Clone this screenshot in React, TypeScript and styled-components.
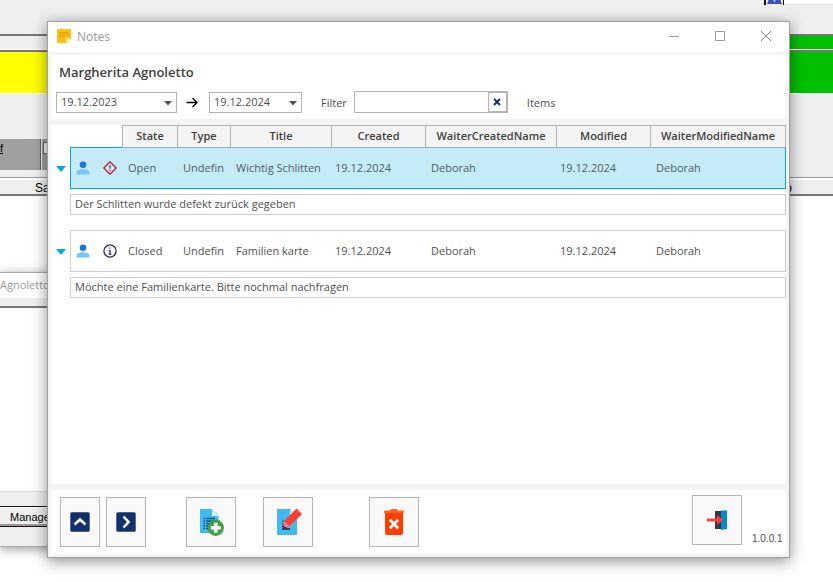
import React from "react";
import styled, { createGlobalStyle } from "styled-components";

const GlobalStyle = createGlobalStyle`
  *, *::before, *::after { box-sizing: border-box; }
  html, body, #root { height: 100%; margin: 0; }
  body { overflow: hidden; background: #fff; font: 11px/16px "Open Sans", "Noto Sans", sans-serif; color: #505050; }
  button, input, select { font: inherit; color: inherit; border-radius: 0; margin: 0; }
`;

const Desktop = styled.div`
  position: relative;
  min-height: 100vh;
  display: flex;
  flex-direction: column;
  font: 11px/12px "Liberation Sans", sans-serif;
  color: #000;
`;

const TopStrip = styled.div`
  height: 34px;
  flex: none;
  background: #efefef;
  display: flex;
  justify-content: flex-end;
  align-items: flex-start;
`;

const UserBadge = styled.div`
  width: 20px;
  height: 5px;
  border: solid #111;
  border-width: 0 1px 0 2px;
  background: #efefef;
  svg { display: block; }
`;

const TopField = styled.div`
  width: 49px;
  height: 5px;
  background: #fff;
  border-bottom: 1px solid #e0e0e0;
`;

const Band = styled.div<{ $height: number; $left: string }>`
  height: ${(p) => p.$height}px;
  flex: none;
  border-top: 2px solid #777;
  border-bottom: 1px solid #fff;
  background: linear-gradient(90deg, ${(p) => p.$left} 50%, #00c000 50%);
`;

const Gap = styled.div<{ $height: number }>`
  height: ${(p) => p.$height}px;
  flex: none;
  background: #efefef;
`;

const GreyRow = styled.div`
  height: 31px;
  flex: none;
  display: flex;
  background: #efefef;
`;

const GreyCell = styled.div<{ $width: number }>`
  width: ${(p) => p.$width}px;
  padding: 3px 0 0;
  background: #a0a0a0;
  border-right: 1px solid #606060;
  margin-right: 1px;
  text-decoration: underline;
`;

const GreyBox = styled.div`
  width: 12px;
  height: 12px;
  margin: 0 1px;
  background: #efefef;
  border: 1px solid #666;
`;

const ColumnHeads = styled.div`
  height: 19px;
  flex: none;
  display: flex;
  justify-content: space-between;
  align-items: center;
  padding: 4px 41px 0 35px;
  font-size: 12px;
  background: linear-gradient(#999 1px, #fff 1px, #fff 3px, #efefef 3px);
  border-bottom: 2px solid #777;
`;

const Paper = styled.div`
  flex: 1;
  background: #fff;
`;

const ListWindow = styled.section`
  position: absolute;
  top: 272px;
  bottom: 35px;
  left: 0;
  width: 400px;
  display: flex;
  flex-direction: column;
  background: #efefef;
  border: solid #aaa;
  border-width: 1px 0;
  box-shadow: 0 2px 10px rgba(0, 0, 0, 0.4);
`;

const ListTitle = styled.div`
  height: 25px;
  flex: none;
  background: #fff;
  color: #999;
  font: 11px/24px "Open Sans", "Noto Sans", sans-serif;
`;

const ListBody = styled.div`
  flex: 1;
  margin-top: 8px;
  background: #fff;
  border-top: 2px solid #777;
  border-bottom: 1px solid #ddd;
`;

const ListFooter = styled.div`
  height: 54px;
  flex: none;
  padding: 14px 0 0;
`;

const ListButton = styled.button`
  display: block;
  width: 120px;
  height: 21px;
  padding: 0 0 0 10px;
  text-align: left;
  font: 11px/14px "Liberation Sans", sans-serif;
  color: #000;
  background: #efefef;
  border: solid #201015;
  border-width: 1px 0;
  box-shadow: inset 0 1px #fff, inset 0 -2px #999;
`;

const Dialog = styled.main`
  position: absolute;
  inset: 21px 43px 24px 47px;
  display: flex;
  flex-direction: column;
  background: #f4f4f4;
  border: 1px solid #a0a0a0;
  box-shadow: 0 3px 14px rgba(0, 0, 0, 0.45);
  font: 11px/16px "Open Sans", "Noto Sans", sans-serif;
  color: #505050;
`;

const TitleBar = styled.header`
  height: 30px;
  flex: none;
  display: flex;
  align-items: flex-start;
  padding-left: 9px;
  background: #fff;
  color: #999;
  font-size: 12px;
`;

const TitleIcon = styled.span`
  height: 28px;
  display: grid;
  place-items: center;
`;

const TitleText = styled.span`
  flex: 1;
  margin-left: 6px;
  line-height: 30px;
`;

const CaptionButton = styled.button`
  width: 46px;
  height: 28px;
  padding: 0;
  display: grid;
  place-items: center;
  border: 0;
  background: none;
`;

const Panel = styled.section`
  margin: 3px 3px 0;
  flex: none;
  background: #fff;
`;

const FilterPanel = styled(Panel)`
  height: 64px;
  padding: 8px 5px 0;
`;

const Heading = styled.h1`
  margin: 0 0 10px 3px;
  font-size: 13px;
  line-height: 18px;
  font-weight: 600;
  color: #404040;
`;

const FilterRow = styled.div`
  display: flex;
  align-items: flex-end;
  height: 22px;
`;

const DateBox = styled.span<{ $width: number }>`
  position: relative;
  width: ${(p) => p.$width}px;
  height: 21px;
  svg { position: absolute; right: 5px; top: 9px; pointer-events: none; }
`;

const DateSelect = styled.select`
  appearance: none;
  width: 100%;
  height: 21px;
  padding: 0 0 1px 4px;
  border: 1px solid #b4b4b4;
  background: #fff;
  line-height: 16px;
`;

const RangeArrow = styled.span`
  width: 32px;
  height: 22px;
  padding-right: 2px;
  display: grid;
  place-items: center;
`;

const FilterLabel = styled.label`
  margin: 0 7px 0 19px;
  line-height: 20px;
`;

const SearchBox = styled.div`
  display: flex;
  width: 154px;
  height: 22px;
  border: 1px solid #b4b4b4;
`;

const SearchInput = styled.input`
  flex: 1;
  min-width: 0;
  padding: 0 4px;
  border: 0;
  outline: 0;
  background: #fff;
`;

const ClearButton = styled.button`
  width: 19px;
  height: 20px;
  padding: 0;
  display: grid;
  place-items: center;
  border: 1px solid #b4b4b4;
  background: #fff;
`;

const ItemsText = styled.span`
  margin-left: 19px;
  line-height: 20px;
`;

const ListPanel = styled(Panel)`
  margin-top: 6px;
  flex: 1;
  min-height: 0;
`;

const Table = styled.table`
  width: 100%;
  table-layout: fixed;
  border-collapse: separate;
  border-spacing: 0;
`;

const Col = styled.col<{ $width?: number }>`
  width: ${(p) => (p.$width ? `${p.$width}px` : "auto")};
`;

const HeadCell = styled.th`
  height: 22px;
  padding: 0 0 1px;
  font-weight: 600;
  color: #404040;
  background: #f4f4f4;
  border: solid #b4b4b4;
  border-width: 1px 0 0 1px;
  &:last-child { border-right-width: 1px; }
`;

const BlankHead = styled.td`
  padding: 0;
`;

const NoteRow = styled.tr<{ $selected: boolean }>`
  height: 42px;
  color: ${(p) => (p.$selected ? "#46626c" : "#505050")};
  --fill: ${(p) => (p.$selected ? "#c5ebf6" : "#fff")};
  --edge: ${(p) => (p.$selected ? "#00a8dc" : "#ccc")};
  --top: ${(p) => (p.$selected ? "#9db2b8" : "#ccc")};
`;

const ExpandCell = styled.td`
  padding: 1px 0 0 5px;
`;

const ExpandButton = styled.button`
  display: block;
  padding: 0;
  border: 0;
  background: none;
  svg { display: block; }
`;

const Cell = styled.td`
  padding: 0 0 0 6px;
  white-space: nowrap;
  overflow: hidden;
  background: var(--fill);
  border: solid var(--edge);
  border-width: 1px 0;
  border-top-color: var(--top);
  &:last-child { border-right-width: 1px; }
`;

const DateCell = styled(Cell)`
  padding-left: 4px;
`;

const IconCell = styled(Cell)<{ $first?: boolean }>`
  padding-left: ${(p) => (p.$first ? 5 : 7)}px;
  border-top-color: var(--edge);
  border-left-width: ${(p) => (p.$first ? 1 : 0)}px;
  svg { display: block; }
`;

const DetailCell = styled.td`
  padding: 5px 0 15px;
`;

const DetailBox = styled.div`
  height: 21px;
  padding: 1px 4px;
  border: 1px solid #ccc;
  background: #fff;
`;

const ActionBar = styled.footer`
  display: flex;
  align-items: flex-start;
  flex: none;
  height: 64px;
  margin: 6px 3px 3px;
  padding: 7px 4px 0 9px;
  background: #fff;
`;

const ActionButton = styled.button<{ $width: number; $gap: number }>`
  width: ${(p) => p.$width}px;
  height: 50px;
  margin-right: ${(p) => p.$gap}px;
  padding: 0;
  display: grid;
  place-items: center;
  border: 1px solid #b4b4b4;
  background: #f9f9f9;
`;

const ExitGroup = styled.div`
  display: flex;
  align-items: flex-end;
  height: 48px;
  margin-left: auto;
`;

const Version = styled.span`
  width: 30px;
  font: 10px/12px "Liberation Sans", sans-serif;
  white-space: nowrap;
`;

const NoteIcon = () => (
  <svg width="14" height="14" viewBox="0 0 14 14">
    <path d="M0 0h14v10l-4 4H0z" fill="#ffc107" />
    <path d="M9 14v-4.500h5z" fill="#fff3c4" />
    <path d="M2 3.500h10M2 5.500h10M2 7.500h6" stroke="#e8a000" />
  </svg>
);

const Caret = () => (
  <svg width="8" height="5" viewBox="0 0 8 5">
    <path d="M0 0h8L4 4.500z" fill="#505050" />
  </svg>
);

const ArrowIcon = () => (
  <svg width="12" height="11" viewBox="0 0 12 11">
    <path d="M.5 5.500H11M6.500 1L11 5.500 6.500 10" fill="none" stroke="#000" strokeWidth="1.300" />
  </svg>
);

const ClearIcon = () => (
  <svg width="8" height="8" viewBox="0 0 8 8">
    <path d="M1 1l6 6M7 1L1 7" stroke="#14336b" strokeWidth="2" />
  </svg>
);

const Triangle = () => (
  <svg width="10" height="6" viewBox="0 0 10 6">
    <path d="M0 0h10L5 6z" fill="#00a8dc" />
  </svg>
);

const PersonIcon = () => (
  <svg width="14" height="14" viewBox="0 0 14 14">
    <circle cx="7" cy="3.700" r="3.300" fill="#1976d2" />
    <path d="M.6 13.500v-1.700C.6 9.300 3 8.200 7 8.200s6.400 1.100 6.400 3.600v1.700z" fill="#7cc3f7" />
  </svg>
);

const WarningIcon = () => (
  <svg width="14" height="14" viewBox="0 0 14 14">
    <path d="M7 .8L13.200 7 7 13.200.8 7z" fill="none" stroke="#b3263c" strokeWidth="1.300" strokeLinejoin="round" />
    <path d="M7 4v3.700M7 8.800v1.300" stroke="#b3263c" strokeWidth="1.300" />
  </svg>
);

const InfoIcon = () => (
  <svg width="14" height="14" viewBox="0 0 14 14">
    <circle cx="7" cy="7" r="6.100" fill="none" stroke="#2e2673" strokeWidth="1.300" />
    <path d="M7 3.400v1.400M5.600 6.500H7v3.500M5.500 10.100h3" fill="none" stroke="#2e2673" strokeWidth="1.200" />
  </svg>
);

const SquareArrow = ({ d }: { d: string }) => (
  <svg width="20" height="20" viewBox="0 0 20 20">
    <rect x=".3" y=".3" width="19.400" height="19.400" rx="1.500" fill="#14306a" />
    <path d={d} fill="none" stroke="#fff" strokeWidth="2.600" />
  </svg>
);

const AddIcon = () => (
  <svg width="28" height="30" viewBox="0 0 28 30">
    <path d="M3 2h12l6.500 6.500V26H3z" fill="#40baf1" />
    <path d="M15 2.500L21.500 9H15z" fill="#e1f5fe" />
    <path d="M6.500 11.500H8m1 0h9M6.500 14h1.500m1 0h9M6.500 16.500H8m1 0h9M6.500 19H8m1 0h9M6.500 21.500H8m1 0h4" stroke="#14508a" strokeWidth="1.500" />
    <circle cx="18.700" cy="20.700" r="8.200" fill="#43a047" />
    <path d="M18.700 15.700v10M13.700 20.700h10" stroke="#fff" strokeWidth="3.600" />
  </svg>
);

const EditIcon = () => (
  <svg width="28" height="30" viewBox="0 0 28 30">
    <path d="M3 2h13l7 7v19H3z" fill="#40baf1" />
    <path d="M16 2.500L21.500 8H16z" fill="#e1f5fe" />
    <path d="M8 14.500h6M8 17h5M8 19.500h7M8 22h8" stroke="#14407a" strokeWidth="1.600" />
    <path d="M9 17l5 4.500 2-.5v1.500H9z" fill="#2c3c50" />
    <path d="M22.500 1.500L28 7 15.500 19.500 10 14z" fill="#f44336" />
    <path d="M10 14l5.500 5.500-1.500 1.300-4-1.200-1.200-3.600z" fill="#f7807a" />
  </svg>
);

const DeleteIcon = () => (
  <svg width="20" height="26" viewBox="0 0 20 26">
    <path d="M1 4h18v19.500a2.500 2.500 0 0 1-2.500 2.500h-13A2.500 2.500 0 0 1 1 23.500z" fill="#ff3d00" />
    <path d="M6 1.500Q6 0 7.500 0h5Q14 0 14 1.500h5a1 1 0 0 1 1 1V4H0V2.500a1 1 0 0 1 1-1z" fill="#ff6333" />
    <path d="M5.800 10.800l8.400 8.400M14.200 10.800l-8.400 8.400" stroke="#fff" strokeWidth="2.800" />
  </svg>
);

const ExitIcon = () => (
  <svg width="20" height="20" viewBox="0 0 20 20">
    <path d="M8 1h7v18H8z" fill="#37353f" />
    <path d="M14 .5h6v18.500l-6 1z" fill="#0288d1" />
    <path d="M0 8.500h10V5l6 5-6 5v-3.500H0z" fill="#f44336" />
  </svg>
);

type Note = {
  selected: boolean;
  urgent: boolean;
  state: string;
  title: string;
  text: string;
};

const notes: Note[] = [
  { selected: true, urgent: true, state: "Open", title: "Wichtig Schlitten", text: "Der Schlitten wurde defekt zurück gegeben" },
  { selected: false, urgent: false, state: "Closed", title: "Familien karte", text: "Möchte eine Familienkarte. Bitte nochmal nachfragen" },
];

const heads = ["State", "Type", "Title", "Created", "WaiterCreatedName", "Modified", "WaiterModifiedName"];
const widths = [19, 26, 26, 55, 53, 101, 94, 131, 94];

export default function App() {
  return (
    <>
      <GlobalStyle />
      <Desktop>
        <TopStrip>
          <UserBadge>
            <svg width="17" height="4" viewBox="0 0 17 4">
              <path d="M1 4l1.500-4h12L16 4z" fill="#3c50b4" />
              <path d="M7 0h3L8.500 3z" fill="#9fa8da" />
            </svg>
          </UserBadge>
          <TopField />
        </TopStrip>
        <Band $height={16} $left="#efefef" />
        <Band $height={44} $left="#ffff00" />
        <Gap $height={45} />
        <GreyRow>
          <GreyCell $width={41}>f</GreyCell>
          <GreyCell $width={60}>
            <GreyBox />
          </GreyCell>
        </GreyRow>
        <Gap $height={7} />
        <ColumnHeads>
          <span>Sa</span>
          <span>o</span>
        </ColumnHeads>
        <Paper />
        <ListWindow>
          <ListTitle>Agnoletto</ListTitle>
          <ListBody />
          <ListFooter>
            <ListButton type="button">Manage</ListButton>
          </ListFooter>
        </ListWindow>

        <Dialog>
          <TitleBar>
            <TitleIcon><NoteIcon /></TitleIcon>
            <TitleText>Notes</TitleText>
            <CaptionButton type="button" aria-label="Minimize">
              <svg width="10" height="10"><path d="M0 5.500h10" stroke="#999" /></svg>
            </CaptionButton>
            <CaptionButton type="button" aria-label="Maximize">
              <svg width="10" height="10"><path d="M.5.5h9v9h-9z" fill="none" stroke="#999" /></svg>
            </CaptionButton>
            <CaptionButton type="button" aria-label="Close">
              <svg width="10" height="10"><path d="M0 0l10 10M10 0L0 10" stroke="#888" /></svg>
            </CaptionButton>
          </TitleBar>

          <FilterPanel>
            <Heading>Margherita Agnoletto</Heading>
            <FilterRow>
              <DateBox $width={121}>
                <DateSelect aria-label="From date"><option>19.12.2023</option></DateSelect>
                <Caret />
              </DateBox>
              <RangeArrow><ArrowIcon /></RangeArrow>
              <DateBox $width={93}>
                <DateSelect aria-label="To date"><option>19.12.2024</option></DateSelect>
                <Caret />
              </DateBox>
              <FilterLabel htmlFor="filter">Filter</FilterLabel>
              <SearchBox>
                <SearchInput id="filter" type="text" />
                <ClearButton type="button" aria-label="Clear filter"><ClearIcon /></ClearButton>
              </SearchBox>
              <ItemsText>Items</ItemsText>
            </FilterRow>
          </FilterPanel>

          <ListPanel>
            <Table>
              <colgroup>
                {widths.map((w, i) => <Col key={i} $width={w} />)}
                <Col />
              </colgroup>
              <thead>
                <tr>
                  <BlankHead colSpan={3} />
                  {heads.map((h) => <HeadCell key={h} scope="col">{h}</HeadCell>)}
                </tr>
              </thead>
              <tbody>
                {notes.map((n) => (
                  <React.Fragment key={n.title}>
                    <NoteRow $selected={n.selected}>
                      <ExpandCell>
                        <ExpandButton type="button" aria-label="Collapse note"><Triangle /></ExpandButton>
                      </ExpandCell>
                      <IconCell $first><PersonIcon /></IconCell>
                      <IconCell>{n.urgent ? <WarningIcon /> : <InfoIcon />}</IconCell>
                      <Cell>{n.state}</Cell>
                      <Cell>Undefin</Cell>
                      <Cell>{n.title}</Cell>
                      <DateCell>19.12.2024</DateCell>
                      <Cell>Deborah</Cell>
                      <DateCell>19.12.2024</DateCell>
                      <Cell>Deborah</Cell>
                    </NoteRow>
                    <tr>
                      <td />
                      <DetailCell colSpan={9}>
                        <DetailBox>{n.text}</DetailBox>
                      </DetailCell>
                    </tr>
                  </React.Fragment>
                ))}
              </tbody>
            </Table>
          </ListPanel>

          <ActionBar>
            <ActionButton type="button" aria-label="Collapse all" $width={40} $gap={6}>
              <SquareArrow d="M4.500 12.500L10 7.500l5.500 5" />
            </ActionButton>
            <ActionButton type="button" aria-label="Next" $width={40} $gap={40}>
              <SquareArrow d="M7.500 4.500l5 5.500-5 5.500" />
            </ActionButton>
            <ActionButton type="button" aria-label="Add note" $width={50} $gap={27}><AddIcon /></ActionButton>
            <ActionButton type="button" aria-label="Edit note" $width={50} $gap={56}><EditIcon /></ActionButton>
            <ActionButton type="button" aria-label="Delete note" $width={50} $gap={0}><DeleteIcon /></ActionButton>
            <ExitGroup>
              <ActionButton type="button" aria-label="Exit" $width={50} $gap={10}><ExitIcon /></ActionButton>
              <Version>1.0.0.1</Version>
            </ExitGroup>
          </ActionBar>
        </Dialog>
      </Desktop>
    </>
  );
}
